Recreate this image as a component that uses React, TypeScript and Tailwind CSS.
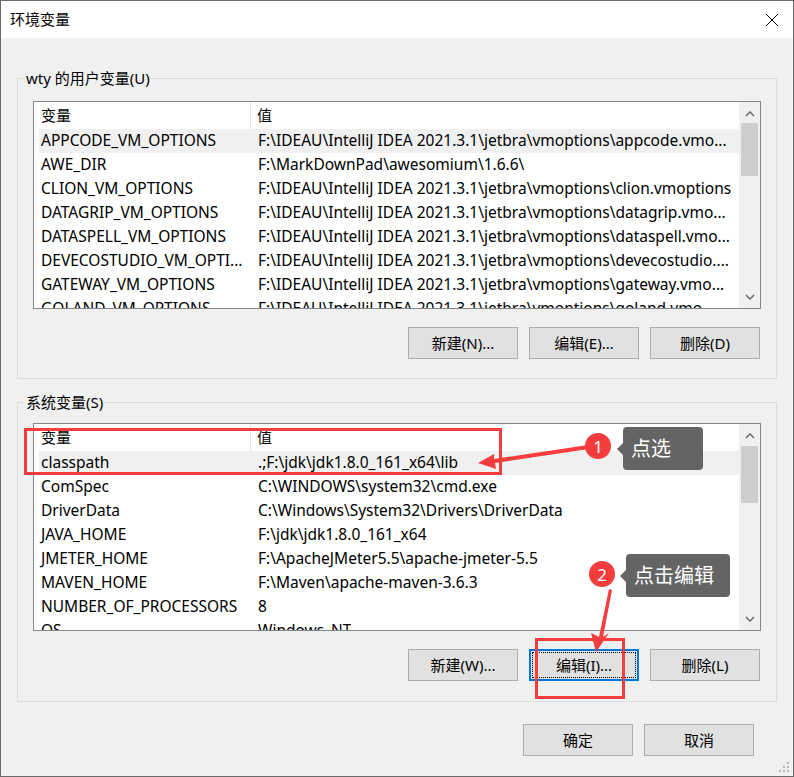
import React from 'react'

type Row = { name: string; value: string }

const userVars: Row[] = [
  { name: 'APPCODE_VM_OPTIONS', value: 'F:\\IDEAU\\IntelliJ IDEA 2021.3.1\\jetbra\\vmoptions\\appcode.vmo...' },
  { name: 'AWE_DIR', value: 'F:\\MarkDownPad\\awesomium\\1.6.6\\' },
  { name: 'CLION_VM_OPTIONS', value: 'F:\\IDEAU\\IntelliJ IDEA 2021.3.1\\jetbra\\vmoptions\\clion.vmoptions' },
  { name: 'DATAGRIP_VM_OPTIONS', value: 'F:\\IDEAU\\IntelliJ IDEA 2021.3.1\\jetbra\\vmoptions\\datagrip.vmo...' },
  { name: 'DATASPELL_VM_OPTIONS', value: 'F:\\IDEAU\\IntelliJ IDEA 2021.3.1\\jetbra\\vmoptions\\dataspell.vmo...' },
  { name: 'DEVECOSTUDIO_VM_OPTI...', value: 'F:\\IDEAU\\IntelliJ IDEA 2021.3.1\\jetbra\\vmoptions\\devecostudio....' },
  { name: 'GATEWAY_VM_OPTIONS', value: 'F:\\IDEAU\\IntelliJ IDEA 2021.3.1\\jetbra\\vmoptions\\gateway.vmo...' },
  { name: 'GOLAND_VM_OPTIONS', value: 'F:\\IDEAU\\IntelliJ IDEA 2021.3.1\\jetbra\\vmoptions\\goland.vmo...' },
]

const sysVars: Row[] = [
  { name: 'classpath', value: '.;F:\\jdk\\jdk1.8.0_161_x64\\lib' },
  { name: 'ComSpec', value: 'C:\\WINDOWS\\system32\\cmd.exe' },
  { name: 'DriverData', value: 'C:\\Windows\\System32\\Drivers\\DriverData' },
  { name: 'JAVA_HOME', value: 'F:\\jdk\\jdk1.8.0_161_x64' },
  { name: 'JMETER_HOME', value: 'F:\\ApacheJMeter5.5\\apache-jmeter-5.5' },
  { name: 'MAVEN_HOME', value: 'F:\\Maven\\apache-maven-3.6.3' },
  { name: 'NUMBER_OF_PROCESSORS', value: '8' },
  { name: 'OS', value: 'Windows_NT' },
]

const Chevron = ({ up }: { up?: boolean }) => (
  <svg width="10" height="6" viewBox="0 0 10 6" className="block">
    <path d={up ? 'M1 5 L5 1 L9 5' : 'M1 1 L5 5 L9 1'} fill="none" stroke="#606060" strokeWidth="1.3" />
  </svg>
)

// list view with header and a vertical scrollbar
const VarList = ({ rows, thumbTop, thumbH }: { rows: Row[]; thumbTop: string; thumbH: string }) => (
  <div className="h-[208px] border border-[#828790] bg-white flex">
    <div className="flex-1 overflow-hidden">
      <div className="h-[27px] flex items-center">
        <div className="w-[217px] h-full pl-[7px] flex items-center border-r border-[#e5e5e5]">变量</div>
        <div className="pl-[6px]">值</div>
      </div>
      {rows.map((r, i) => (
        <div
          key={r.name}
          className={`ml-[5px] h-[24px] flex items-center whitespace-nowrap text-[15.5px] ${i === 0 ? 'bg-[#f0f0f0]' : ''}`}
        >
          <div className="w-[212px] shrink-0 pl-[2px] overflow-hidden">{r.name}</div>
          <div className="pl-[7px] overflow-hidden">{r.value}</div>
        </div>
      ))}
    </div>
    <div className="w-[21px] bg-[#f0f0f0] flex flex-col items-center">
      <div className="h-[21px] w-full flex items-center justify-center pt-[2px]">
        <Chevron up />
      </div>
      <div className={`w-[17px] bg-[#cdcdcd] ${thumbTop} ${thumbH}`} />
      <div className="flex-1" />
      <div className="h-[21px] w-full flex items-center justify-center pb-[2px]">
        <Chevron />
      </div>
    </div>
  </div>
)

const Btn = ({ label, focused }: { label: string; focused?: boolean }) => (
  <div
    className={`relative w-[110px] h-[32px] bg-[#e1e1e1] flex items-center justify-center ${
      focused ? 'border-2 border-[#0078d7]' : 'border border-[#adadad]'
    }`}
  >
    {focused && <div className="absolute inset-[1px] border border-dotted border-black" />}
    {label}
  </div>
)

const Group = ({ title, children, className }: { title: string; children: React.ReactNode; className: string }) => (
  <div className={`relative border border-[#dcdcdc] px-[15px] ${className}`}>
    <span className="absolute -top-[11px] left-[7px] px-[1px] bg-[#f0f0f0] leading-[20px]">{title}</span>
    {children}
  </div>
)

export default function App() {
  return (
    <div className="relative w-[794px] h-[777px] text-[15px] text-black font-['Noto_Sans','Noto_Sans_CJK_SC',sans-serif]">
      <div className="w-full h-full border border-[#6b6b6b] bg-[#f0f0f0] flex flex-col">
        {/* title bar */}
        <div className="h-[37px] bg-white flex items-center justify-between pl-[9px] pr-[14px]">
          <span>环境变量</span>
          <svg width="14" height="14" viewBox="0 0 14 14">
            <path d="M1 1 L13 13 M13 1 L1 13" stroke="#000" strokeWidth="1" />
          </svg>
        </div>

        <div className="px-[16px] flex flex-col">
          <Group title="wty 的用户变量(U)" className="mt-[40px] pt-[22px] pb-[19px]">
            <VarList rows={userVars} thumbTop="mt-[0px]" thumbH="h-[53px]" />
            <div className="mt-[18px] flex justify-end gap-[11px] pr-[1px]">
              <Btn label="新建(N)..." />
              <Btn label="编辑(E)..." />
              <Btn label="删除(D)" />
            </div>
          </Group>

          <Group title="系统变量(S)" className="mt-[23px] pt-[20px] pb-[20px]">
            <VarList rows={sysVars} thumbTop="mt-[1px]" thumbH="h-[57px]" />
            <div className="mt-[18px] flex justify-end gap-[11px] pr-[1px]">
              <Btn label="新建(W)..." />
              <Btn label="编辑(I)..." focused />
              <Btn label="删除(L)" />
            </div>
          </Group>

          <div className="mt-[22px] flex justify-end gap-[11px] pr-[23px]">
            <Btn label="确定" />
            <Btn label="取消" />
          </div>
        </div>
        <div className="flex-1" />
        <div className="flex justify-end pr-[3px] pb-[3px]">
          <svg width="12" height="12" viewBox="0 0 12 12">
            <g fill="#b5b5b5">
              <rect x="9" y="1" width="2" height="2" />
              <rect x="5" y="5" width="2" height="2" />
              <rect x="9" y="5" width="2" height="2" />
              <rect x="1" y="9" width="2" height="2" />
              <rect x="5" y="9" width="2" height="2" />
              <rect x="9" y="9" width="2" height="2" />
            </g>
          </svg>
        </div>
      </div>

      {/* annotations drawn over the dialog */}
      <svg className="absolute inset-0 pointer-events-none" width="794" height="777" viewBox="0 0 794 777">
        <g fill="none" stroke="#f53d3d" strokeWidth="3">
          <rect x="25.5" y="429.5" width="475" height="44" />
          <rect x="536.5" y="639.5" width="87" height="58" />
        </g>
        <g fill="#f53d3d">
          <polygon points="478,463 494,454 494,459 588,445 589,449 495,463 496,469" />
          <polygon points="596,652 591,633 599,637 609,589 612,590 603,637 609,633" />
        </g>
      </svg>

      <div className="absolute left-[585px] top-[433px] w-[26px] h-[26px] rounded-full bg-[#f43c3c] text-white text-[17px] leading-none flex items-center justify-center">
        1
      </div>
      <div className="absolute left-[589px] top-[561px] w-[26px] h-[26px] rounded-full bg-[#f43c3c] text-white text-[17px] leading-none flex items-center justify-center">
        2
      </div>

      <div className="absolute left-[623px] top-[427px] w-[80px] h-[43px] rounded-[4px] bg-[#646464] text-white text-[20px] pl-[8px] flex items-center">
        <span className="absolute -left-[6px] top-1/2 -translate-y-1/2 border-y-[6px] border-y-transparent border-r-[6px] border-r-[#646464]" />
        点选
      </div>
      <div className="absolute left-[626px] top-[554px] w-[104px] h-[43px] rounded-[4px] bg-[#646464] text-white text-[20px] pl-[8px] flex items-center">
        <span className="absolute -left-[6px] top-1/2 -translate-y-1/2 border-y-[6px] border-y-transparent border-r-[6px] border-r-[#646464]" />
        点击编辑
      </div>
    </div>
  )
}
